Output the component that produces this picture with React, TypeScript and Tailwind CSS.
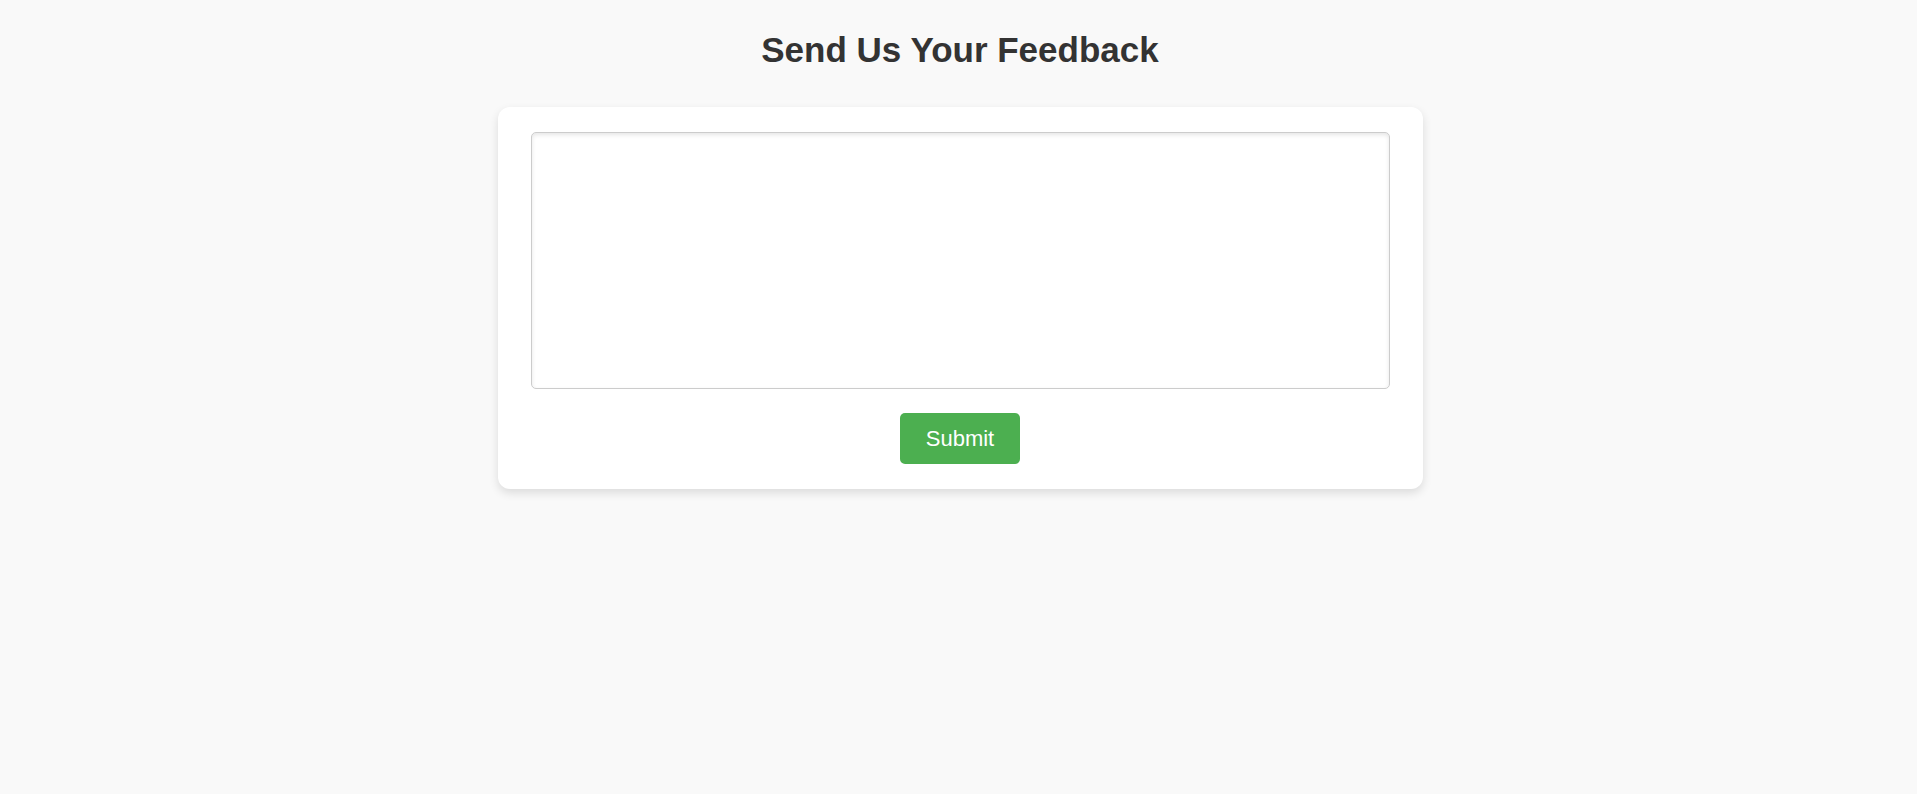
export default function App() {
  return (
    <div className="min-h-screen bg-[#f9f9f9] font-['Liberation_Sans',Arial,sans-serif] pt-[20px] pl-[3px]">
      <h1 className="text-center text-[35px] font-bold text-[#333] leading-[60px] m-0">Send Us Your Feedback</h1>
      <div className="mx-auto mt-[27px] w-[925px] bg-white rounded-[12px] shadow-[0_4px_10px_rgba(0,0,0,0.12)] px-[33px] pt-[25px] pb-[25px] flex flex-col items-center">
        <textarea className="w-full h-[257px] border border-[#ccc] rounded-[5px] shadow-[inset_0_2px_4px_rgba(0,0,0,0.1)] resize-none outline-none bg-white"></textarea>
        <button className="mt-[24px] w-[120px] h-[51px] bg-[#4caf50] text-white text-[22px] rounded-[5px]">Submit</button>
      </div>
    </div>
  );
}
